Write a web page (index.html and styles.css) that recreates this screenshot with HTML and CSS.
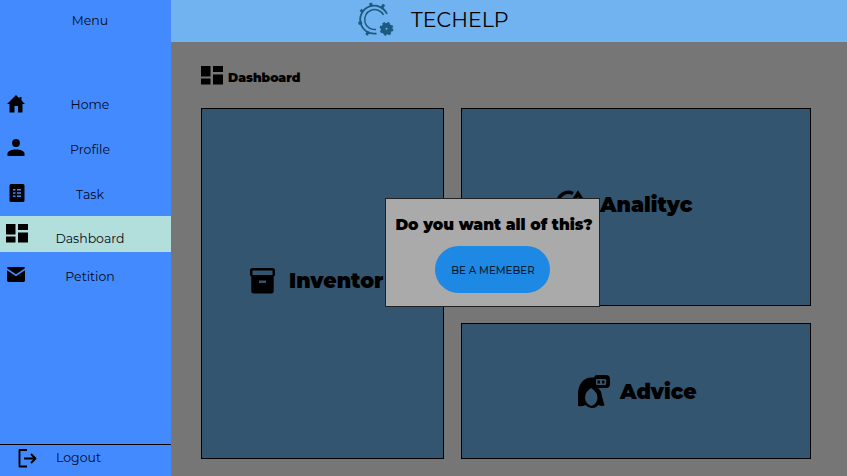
FILE: index.html
```html
<!DOCTYPE html>
<html lang="en">
<head>
<meta charset="utf-8">
<title>Techelp</title>
<link rel="stylesheet" href="styles.css">
</head>
<body>
<svg class="defs" width="0" height="0">
  <symbol id="dash" viewBox="0 0 22 19"><path d="M0 0h9.500v10.500H0zM12 0h10v6H12zM0 12.500h9.500v6H0zM12 8.500h10v10H12z"/></symbol>
</svg>
<div class="app">
  <aside class="sidebar">
    <div class="menu-title">Menu</div>
    <nav>
      <a class="item home"><svg width="18" height="18" viewBox="0 0 18 18"><path d="M9 0L0 9h2.500v8.500h5V11h3.500v6.500h4.500V9H18L14.500 5.500V2h-2v1.500z"/></svg><span>Home</span></a>
      <a class="item profile"><svg width="18" height="17" viewBox="0 0 18 17"><circle cx="9" cy="4" r="3.900"/><path d="M.5 17v-2.500C.5 12 5 10.500 9 10.500s8.500 1.500 8.500 4V17z"/></svg><span>Profile</span></a>
      <a class="item task"><svg width="16" height="18" viewBox="0 0 16 18"><path fill-rule="evenodd" d="M2 0h12q1.500 0 1.500 1.500v15Q15.500 18 14 18H2Q.5 18 .5 16.500v-15Q.5 0 2 0zM4 5v1.500h2.500V5zm4 0v1.500h4V5zM4 8.200v1.500h2.500V8.200zm4 0v1.500h4V8.200zm-4 3.300V13h2.500v-1.500zm4 0V13h4v-1.500z"/></svg><span>Task</span></a>
      <a class="item dashboard"><svg width="22" height="19"><use href="#dash"/></svg><span>Dashboard</span></a>
      <a class="item petition"><svg width="18" height="15" viewBox="0 0 18 15"><path d="M1.500 0h15Q18 0 18 1.300L9 7.200 0 1.300Q0 0 1.500 0zM0 3.200l9 6 9-6v10q0 1.800-1.500 1.800h-15Q0 15 0 13.200z"/></svg><span>Petition</span></a>
    </nav>
    <a class="logout"><svg width="19" height="19" viewBox="0 0 19 19"><path d="M9 1H1.500v16.500H9M6 9.500h11M13 5l4.500 4.500L13 14" fill="none" stroke="#000" stroke-width="1.900" stroke-linejoin="round"/></svg><span>Logout</span></a>
  </aside>
  <div class="page">
    <header class="topbar">
      <svg width="37" height="36" viewBox="0 0 37 36">
        <g fill="none" stroke="#1d5a80">
          <path d="M29 13A14 14 0 1 0 18.500 32.500" stroke-width="1.800"/>
          <path d="M25.500 14A10 10 0 1 0 18 28.500" stroke-width="1.500"/>
          <path d="M13.500 5.500L12.500 2M24 6.500L26 3.500M5.500 11L2.500 9M4 21.500L.5 22.500M10.500 30.500L8.500 34" stroke-width="3"/>
          <circle cx="28.500" cy="27.800" r="3.400" stroke-width="4.800"/>
          <circle cx="28.500" cy="27.800" r="6" stroke-width="1.800" stroke-dasharray="2.500 2.212"/>
        </g>
      </svg>
      <h1>TECHELP</h1>
    </header>
    <main>
      <h2><svg width="22" height="19"><use href="#dash"/></svg><span>Dashboard</span></h2>
      <div class="cards">
        <section class="card inventory"><svg width="25" height="26" viewBox="0 0 25 26"><path fill-rule="evenodd" d="M2.500 0h20Q25 0 25 2.500v4Q25 8 23.700 8.500V23q0 2.500-2.500 2.500H3.800Q1.300 25.500 1.300 23V8.500Q0 8 0 6.500v-4Q0 0 2.500 0zM2.500 2.500v4.500h20V2.500zM9 12.500V15h7v-2.500z"/></svg><span>Inventor</span></section>
        <section class="card analytics"><svg width="32" height="30" viewBox="0 0 32 30"><path d="M17 3.500C10 0 2 5 2 13s6 13 13 13M22 3.500l6 9H16zM18 17h9v9h-9z" fill="none" stroke="#000" stroke-width="3.500"/></svg><span>Analityc</span></section>
        <section class="card advice"><svg width="33" height="33" viewBox="0 0 33 33"><path fill-rule="evenodd" d="M1 31V19C1 9 7 2.500 14 2.500h5v9q5.500 3 6 10L27.500 30.500q-3 1-6-.5-3 3.500-7 3t-6-3q-4 2-7.500 1zM14 13Q8 17 8 23q.5 6 6.500 8 6-3 6-8 0-6-6.500-10z"/><path fill-rule="evenodd" d="M20 0h9q4 0 4 4v5q0 4-4 4h-6q-5 0-6-5V4q0-4 3-4zM20 4q-1.200 0-1.200 1.200v3.600q0 1.200 1.200 1.200h8q1.200 0 1.200-1.200V5.200Q29.200 4 28 4z"/><path d="M20.500 5.500h2.500v3h-2.500zM25 5.500h2.500v3H25z"/></svg><span>Advice</span></section>
      </div>
    </main>
  </div>
</div>
<div class="modal" role="dialog">
  <p>Do you want all of this?</p>
  <button>BE A MEMEBER</button>
</div>
</body>
</html>
```
FILE: styles.css
```css
* { box-sizing: border-box; }
body { margin: 0; width: 847px; height: 476px; overflow: hidden; font-family: Montserrat, Inter, sans-serif; color: #000; }
.defs { position: absolute; }
svg { display: block; flex: none; }
.app { display: grid; grid-template-columns: 171px 1fr; height: 476px; }
.sidebar { display: flex; flex-direction: column; background: #448aff; font-size: 12.5px; color: #020a1a; }
.sidebar svg { fill: #000; }
.menu-title { height: 82px; padding: 13px 0 0 9px; text-align: center; line-height: 16px; }
nav { flex: 1; }
.item { display: grid; grid-template-columns: 33px 114px; align-items: start; height: 45px; line-height: 16px; }
.item svg { justify-self: center; }
.item span { text-align: center; white-space: nowrap; }
.home svg { margin: 13px 1px 0 0; }
.home span { padding-top: 15px; }
.profile svg { margin: 12px 1px 0 0; }
.profile span { padding-top: 15px; }
.task { height: 44px; }
.task svg { margin-top: 12px; }
.task span { padding-top: 15px; }
.dashboard { height: 36px; background: #b2dfdb; }
.dashboard svg { margin-top: 8px; }
.dashboard span { padding-top: 15px; }
.petition svg { margin: 15px 1px 0 0; }
.petition span { padding-top: 17px; }
.logout { display: flex; align-items: flex-start; gap: 19px; height: 32px; padding: 4px 0 0 18px; border-top: 1px solid #000; line-height: 18px; }
.page { display: flex; flex-direction: column; background: #767676; }
.topbar { display: flex; align-items: flex-start; gap: 16px; height: 42px; padding: 1px 0 0 187px; background: #70b3f0; }
.topbar h1 { margin: 7px 0 0; font-size: 20.6px; line-height: 24px; font-weight: 400; }
main { flex: 1; padding: 24px 36px 17px 30px; }
h2 { display: flex; align-items: flex-start; gap: 5px; height: 42px; margin: 0; font-size: 12.3px; line-height: 23px; font-weight: 900; }
.cards { display: grid; grid-template-columns: 243px 350px; grid-template-rows: 198px 136px; gap: 17px; }
.card { display: flex; align-items: center; background: #34556f; border: 1px solid #000; font-size: 20.5px; font-weight: 900; }
.inventory { grid-row: 1 / 3; gap: 14px; padding: 0 0 6px 48px; }
.analytics { gap: 12px; padding: 0 0 5px 94px; }
.advice { gap: 10px; padding: 0 0 0 115px; }
.modal { position: absolute; left: 385px; top: 198px; width: 215px; height: 109px; display: flex; flex-direction: column; align-items: center; background: #aaa; border: 1px solid #222; }
.modal p { margin: 15px 0 10px; font-size: 15.4px; line-height: 22px; font-weight: 900; white-space: nowrap; padding-left: 3px; }
.modal button { width: 115px; height: 47px; padding: 1px 0 0 1px; border: 0; border-radius: 24px; background: #1e88e5; color: #041c30; font: 500 10.300px Montserrat, Inter, sans-serif; }
```
